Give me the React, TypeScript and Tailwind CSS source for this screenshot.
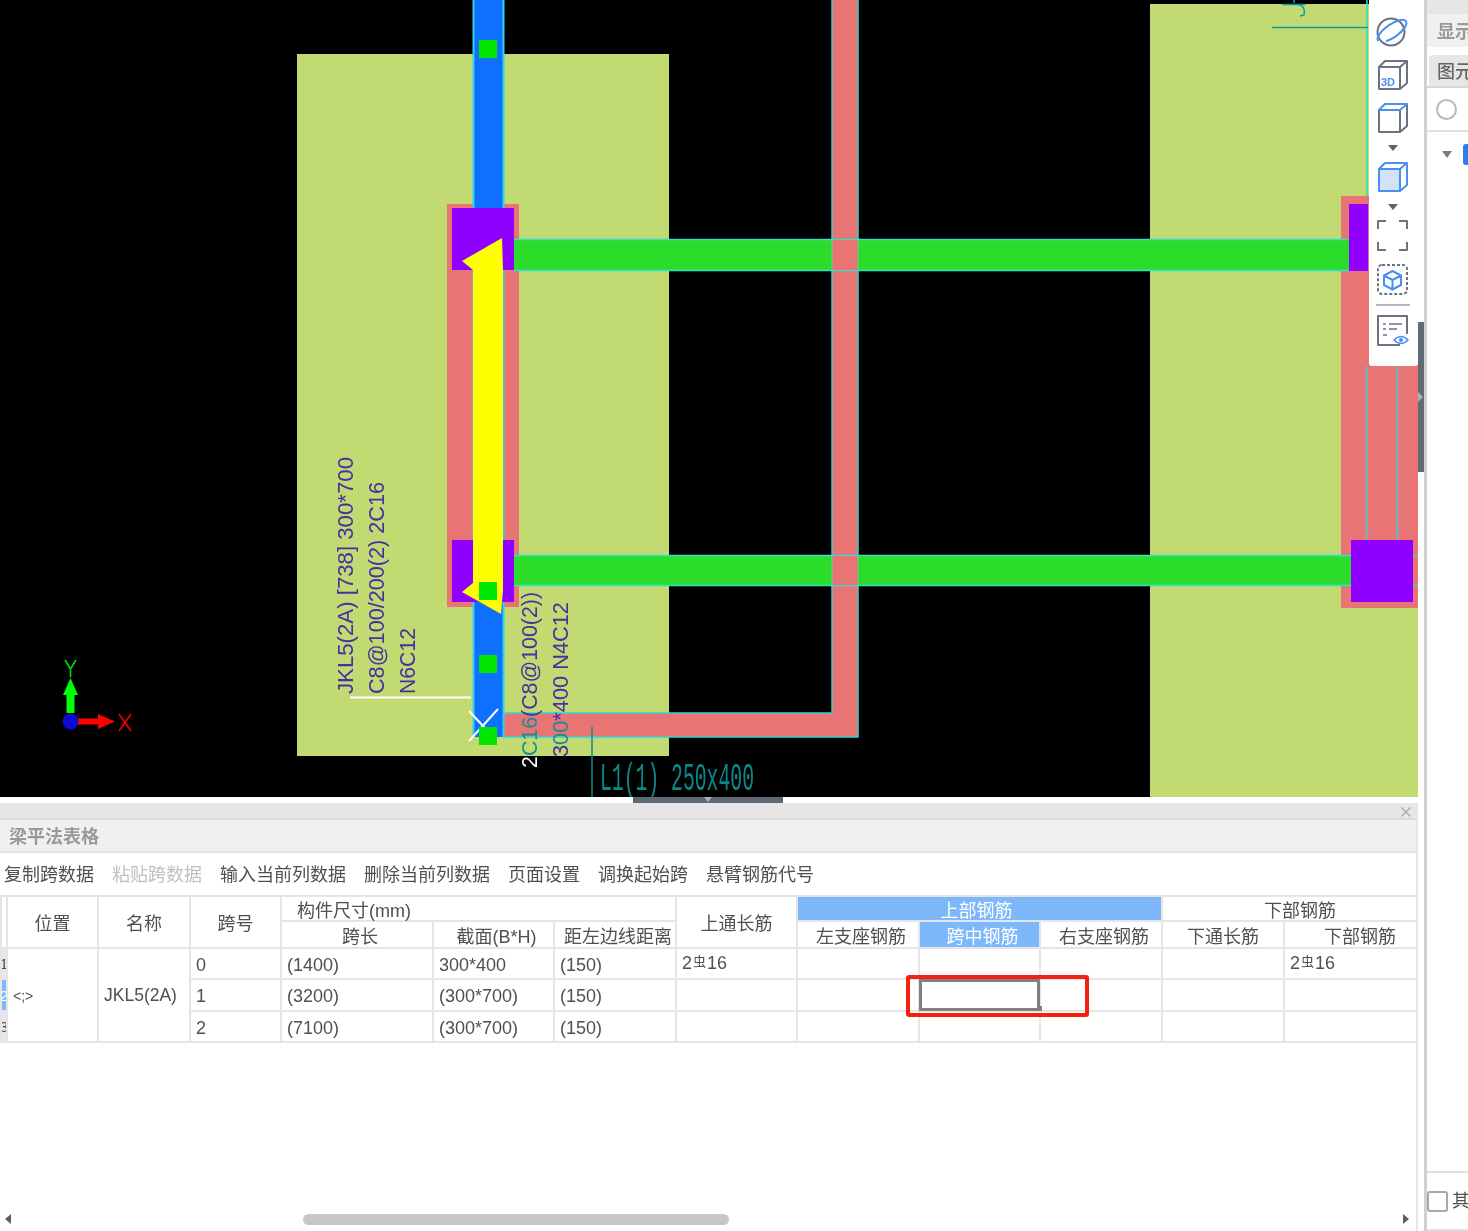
import React from "react";

const cellB = "border-2 border-[#e5e5e5]";
const head = `${cellB} p-0 pt-[4px] text-center font-normal align-middle`;
const data = `${cellB} px-[5px] py-0 pt-[2px] text-left align-middle`;

function Rebar() {
  return (
    <span className="relative top-[-2px]">
      2<span className="relative top-[-3px] mx-[1px] text-[13px]">虫</span>16
    </span>
  );
}

function RowNo({ n, active }: { n: string; active?: boolean }) {
  return (
    <td className={`${cellB} overflow-hidden p-0 text-[15px] ${active ? "bg-[#7cb8fa] text-white" : "bg-[#e8e8e8]"}`}>
      <div className="mr-[-2px] flex justify-end">{n}</div>
    </td>
  );
}

function Canvas() {
  const mono = "fill-[#47309f]";
  return (
    <svg width="1418" height="797" viewBox="0 0 1418 797" className="block bg-black">
      <rect x="297" y="54" width="372" height="702" fill="#c1db72" />
      <rect x="1150" y="4" width="268" height="793" fill="#c1db72" />

      {/* pink beam */}
      <rect x="832" y="0" width="26" height="737" fill="#e97474" />
      <rect x="503" y="713" width="355" height="24" fill="#e97474" />
      <path d="M503 713H832V0M858 0V737H503" fill="none" stroke="#35d4d4" strokeWidth="1.5" />

      {/* left column */}
      <rect x="447" y="204" width="72" height="403" fill="#e97474" />
      <rect x="473" y="0" width="31" height="737" fill="#0f6fff" />
      <path d="M473.5 0V737M503.5 0V737" stroke="#35d0f0" strokeWidth="2" />
      <rect x="452" y="208" width="62" height="62" fill="#8f00ff" />
      <rect x="452" y="540" width="62" height="62" fill="#8f00ff" />

      {/* green beams */}
      <rect x="514" y="239" width="834" height="32" fill="#2bdc2b" />
      <rect x="514" y="555" width="838" height="31" fill="#2bdc2b" />
      <rect x="1413" y="555" width="5" height="31" fill="#2bdc2b" />
      <path d="M514 239.5H1348M514 270.5H1348M514 555.5H1352M514 585.5H1352" stroke="#35e0c8" strokeWidth="1.5" />
      <rect x="832" y="240" width="26" height="30" fill="#e97474" />
      <rect x="832" y="556" width="26" height="29" fill="#e97474" />
      <path d="M832 240V270M858 240V270M832 556V585M858 556V585" stroke="#6fc4b0" strokeWidth="1" />

      {/* right column */}
      <rect x="1341" y="196" width="77" height="412" fill="#e97474" />
      <rect x="1349" y="204" width="19" height="67" fill="#8f00ff" />
      <rect x="1341" y="240" width="8" height="31" fill="#2bdc2b" />
      <rect x="1341" y="555" width="10" height="31" fill="#2bdc2b" />
      <path d="M1341 239.5H1349M1341 270.5H1349M1341 555.5H1351M1341 585.5H1351M1413 555.5H1418M1413 585.5H1418" stroke="#35e0c8" strokeWidth="1.5" />
      <rect x="1351" y="540" width="62" height="62" fill="#8f00ff" />
      <path d="M1366.5 366V540M1397.5 366V540" stroke="#35d4d4" strokeWidth="1.5" />
      <path d="M1367 0V196" stroke="#35d4d4" strokeWidth="1.5" />

      {/* yellow arrow */}
      <polygon points="502,238 462,261 473,270 473,583 462,592 501,614 503,590 503,270" fill="#ffff00" />

      {/* grips */}
      <rect x="479" y="40" width="18" height="18" fill="#00e600" />
      <rect x="479" y="582" width="18" height="18" fill="#00e600" />
      <rect x="479" y="655" width="18" height="18" fill="#00e600" />
      <path d="M469 711L497 741M498 709L469 741" stroke="#ffffff" strokeWidth="2" />
      <rect x="479" y="727" width="18" height="18" fill="#00e600" />

      {/* labels */}
      <path d="M350 697.5H471" stroke="#ffffff" strokeWidth="2" />
      <text transform="translate(353 694) rotate(-90)" textLength="237" lengthAdjust="spacingAndGlyphs" fontSize="22" className={mono}>
        JKL5(2A) [738] 300*700
      </text>
      <text transform="translate(384 694) rotate(-90)" textLength="212" lengthAdjust="spacingAndGlyphs" fontSize="22" className={mono}>
        C8@100/200(2) 2C16
      </text>
      <text transform="translate(415 694) rotate(-90)" textLength="66" lengthAdjust="spacingAndGlyphs" fontSize="22" className={mono}>
        N6C12
      </text>
      <text transform="translate(537 768) rotate(-90)" textLength="176" lengthAdjust="spacingAndGlyphs" fontSize="22" className={mono}>
        <tspan fill="#ffffff">2</tspan>
        <tspan fill="#1b8f96">C16</tspan>
        <tspan>(C8@100(2))</tspan>
      </text>
      <text transform="translate(568 757) rotate(-90)" textLength="155" lengthAdjust="spacingAndGlyphs" fontSize="22" className={mono}>
        3<tspan fill="#1b8f96">00</tspan>*400 N4C12
      </text>
      <path d="M592 727V797" stroke="#0a8a8c" strokeWidth="1.5" />
      <text x="600" y="790" textLength="154" lengthAdjust="spacingAndGlyphs" fontSize="38" fill="#09898c" className="font-['Liberation_Mono',monospace]">
        L1(1) 250x400
      </text>
      <path d="M1272 27.5H1368M1282 4.5H1305M1298 4.5Q1306 6 1304 15L1300 16M1294 0V3" fill="none" stroke="#08a0a0" strokeWidth="1.5" />

      {/* axes */}
      <path d="M70.5 713V690" stroke="#00ff00" strokeWidth="8" />
      <polygon points="70.5,678 63,695 78,695" fill="#00ff00" />
      <path d="M78 721.5H100" stroke="#ff0000" strokeWidth="6" />
      <polygon points="115,721.5 98,714 98,729" fill="#ff0000" />
      <circle cx="70.5" cy="721.5" r="8" fill="#0a0ad0" />
      <path d="M65 660L70.5 669L76 660M70.5 669V677" fill="none" stroke="#00dd00" strokeWidth="1.6" />
      <path d="M119 714L131 731M131 714L119 731" fill="none" stroke="#ee0000" strokeWidth="1.6" />
    </svg>
  );
}

function ToolIcons() {
  const g = "#6b7280";
  const b = "#4a90ee";
  const w = "2";
  return (
    <svg width="49" height="366" viewBox="1369 0 49 366" className="block">
      <circle cx="1391" cy="32" r="13.5" fill="none" stroke={g} strokeWidth={w} />
      <ellipse cx="1392" cy="31" rx="17" ry="6.5" transform="rotate(-35 1392 31)" fill="none" stroke={b} strokeWidth={w} strokeDasharray="30 8 60" />

      <path d="M1379 67H1400V89H1379ZM1379 67L1385 61H1407V83L1400 89M1400 67L1407 61" fill="none" stroke={g} strokeWidth={w} strokeLinejoin="round" />
      <text x="1381" y="86" fontSize="11" fontWeight="700" fill={b}>3D</text>

      <path d="M1379 110H1400V132H1379ZM1400 132L1407 126V104" fill="none" stroke={g} strokeWidth={w} strokeLinejoin="round" />
      <path d="M1379 110L1385 104H1407L1400 110Z" fill="none" stroke={b} strokeWidth={w} strokeLinejoin="round" />
      <polygon points="1388,145 1398,145 1393,151" fill="#5b6270" />

      <path d="M1379 169H1400V191H1379Z" fill="#d2e3f9" stroke={b} strokeWidth={w} strokeLinejoin="round" />
      <path d="M1379 169L1385 163H1407V185L1400 191M1400 169L1407 163" fill="none" stroke={b} strokeWidth={w} strokeLinejoin="round" />
      <polygon points="1388,204 1398,204 1393,210" fill="#5b6270" />

      <path d="M1378 229V221H1386M1399 221H1407V229M1407 242V250H1399M1386 250H1378V242" fill="none" stroke={g} strokeWidth={w} strokeLinejoin="round" />

      <rect x="1378" y="265" width="29" height="29" rx="4" fill="none" stroke={g} strokeWidth={w} strokeDasharray="3 2" />
      <path d="M1392.5 271L1401 275.5V285L1392.5 289.5L1384 285V275.5ZM1384 275.5L1392.5 280L1401 275.5M1392.5 280V289.5" fill="none" stroke={b} strokeWidth={w} strokeLinejoin="round" />

      <path d="M1376 305H1410" stroke="#6b7280" strokeWidth="1.2" />

      <path d="M1400 345H1378V316H1407V334" fill="none" stroke={g} strokeWidth={w} strokeLinejoin="round" />
      <path d="M1383 324H1386M1389 324H1402M1383 329H1386M1389 329H1397M1383 335H1387" stroke={g} strokeWidth="1.5" />
      <path d="M1394 340Q1401 333 1408 340Q1401 347 1394 340Z" fill="#ffffff" stroke={b} strokeWidth="1.4" />
      <circle cx="1401" cy="340" r="2" fill={b} />
    </svg>
  );
}

function BeamTable() {
  return (
    <table className="w-[1417px] table-fixed border-collapse text-[18px] leading-none text-[#505050]">
      <colgroup>
        <col className="w-[6px]" />
        <col className="w-[91px]" />
        <col className="w-[92px]" />
        <col className="w-[91px]" />
        <col className="w-[152px]" />
        <col className="w-[121px]" />
        <col className="w-[122px]" />
        <col className="w-[121px]" />
        <col className="w-[122px]" />
        <col className="w-[121px]" />
        <col className="w-[122px]" />
        <col className="w-[122px]" />
        <col className="w-[134px]" />
      </colgroup>
      <thead>
        <tr className="h-[25px]">
          <th rowSpan={2} className={head} />
          <th rowSpan={2} className={head}>位置</th>
          <th rowSpan={2} className={head}>名称</th>
          <th rowSpan={2} className={head}>跨号</th>
          <th colSpan={3} className={`${cellB} p-0 pl-[15px] pt-[4px] text-left font-normal`}>构件尺寸(mm)</th>
          <th rowSpan={2} className={head}>上通长筋</th>
          <th colSpan={3} className={`${cellB} bg-[#7cb8fa] p-0 pr-[6px] pt-[4px] text-center font-normal text-white`}>上部钢筋</th>
          <th colSpan={2} className={`${cellB} p-0 pl-[20px] pt-[4px] text-center font-normal`}>下部钢筋</th>
        </tr>
        <tr className="h-[27px]">
          <th className={`${head} pl-[6px]`}>跨长</th>
          <th className={`${head} pl-[6px]`}>截面(B*H)</th>
          <th className={`${head} overflow-hidden whitespace-nowrap pl-[6px]`}>距左边线距离</th>
          <th className={`${head} pl-[6px]`}>左支座钢筋</th>
          <th className={`${head} bg-[#7cb8fa] pl-[6px] text-white`}>跨中钢筋</th>
          <th className={`${head} pl-[6px]`}>右支座钢筋</th>
          <th className={head}>下通长筋</th>
          <th className={`${head} pl-[18px]`}>下部钢筋</th>
        </tr>
      </thead>
      <tbody>
        <tr className="h-[31px]">
          <RowNo n="1" />
          <td rowSpan={3} className={`${data} text-[14px]`}>&lt;;&gt;</td>
          <td rowSpan={3} className={`${data} overflow-hidden whitespace-nowrap text-[17.5px]`}>JKL5(2A)</td>
          <td className={data}>0</td>
          <td className={data}>(1400)</td>
          <td className={data}>300*400</td>
          <td className={data}>(150)</td>
          <td className={data}><Rebar /></td>
          <td className={data} />
          <td className={data} />
          <td className={data} />
          <td className={data} />
          <td className={data}><Rebar /></td>
        </tr>
        <tr className="h-[32px]">
          <RowNo n="2" active />
          <td className={data}>1</td>
          <td className={data}>(3200)</td>
          <td className={data}>(300*700)</td>
          <td className={data}>(150)</td>
          <td className={data} />
          <td className={data} />
          <td className={`${data} relative`}>
            <div className="absolute inset-[-1px] border-[3px] border-[#808080]" />
            <div className="absolute bottom-[-1px] right-[-3px] h-[5px] w-[5px] bg-[#808080]" />
            <div className="absolute left-[-14px] right-[-50px] top-[-5px] h-[42px] rounded-[3px] border-[4px] border-[#f5210f]" />
          </td>
          <td className={data} />
          <td className={data} />
          <td className={data} />
        </tr>
        <tr className="h-[31px]">
          <RowNo n="3" />
          <td className={data}>2</td>
          <td className={data}>(7100)</td>
          <td className={data}>(300*700)</td>
          <td className={data}>(150)</td>
          <td className={data} />
          <td className={data} />
          <td className={data} />
          <td className={data} />
          <td className={data} />
          <td className={data} />
        </tr>
      </tbody>
    </table>
  );
}

export default function App() {
  const tools = ["复制跨数据", "粘贴跨数据", "输入当前列数据", "删除当前列数据", "页面设置", "调换起始跨", "悬臂钢筋代号"];
  return (
    <div className="flex h-[1231px] w-[1468px] overflow-hidden bg-white font-['Liberation_Sans','Noto_Sans_CJK_SC',sans-serif] blur-[0.4px]">
      <div className="flex w-[1418px] flex-col">
        <div className="relative h-[797px] w-[1418px]">
          <Canvas />
          <div className="absolute right-0 top-0 h-[366px] w-[49px] rounded-b-[3px] bg-white">
            <ToolIcons />
          </div>
        </div>
        <div className="h-[6px] bg-white">
          <div className="relative ml-[633px] h-[6px] w-[150px] bg-[#5f6a74]">
            <div className="absolute left-[71px] top-0 h-0 w-0 border-x-[4px] border-t-[5px] border-x-transparent border-t-[#aab0b6]" />
          </div>
        </div>
        <div className="flex min-h-0 flex-1 flex-col border-r-2 border-[#e5e5e5]">
          <div className="flex h-[17px] items-center justify-end border-b-2 border-[#dcdcdc] bg-[#e6e6e6] pr-[5px] pt-[2px]">
            <svg width="10" height="10" viewBox="0 0 10 10"><path d="M0.5 0.5L9.5 9.5M9.5 0.5L0.5 9.5" stroke="#a8a8a8" strokeWidth="1.2" /></svg>
          </div>
          <div className="flex h-[33px] items-center border-b-2 border-[#e3e3e3] bg-[#f0f0f0] pl-[9px] pt-[3px] text-[18px] font-bold text-[#999999]">
            梁平法表格
          </div>
          <div className="flex h-[42px] items-center gap-[18px] pl-[4px] pt-[3px] text-[18px] text-[#505050]">
            {tools.map((t, i) => (
              <span key={t} className={i === 1 ? "text-[#c0c0c0]" : ""}>{t}</span>
            ))}
          </div>
          <BeamTable />
          <div className="min-h-0 flex-1" />
          <div className="mb-[2px] flex h-[20px] items-center">
            <svg width="10" height="12" viewBox="0 0 10 12" className="ml-[3px]"><polygon points="8,1 2,6 8,11" fill="#58606c" /></svg>
            <div className="ml-[290px] h-[11px] w-[426px] rounded-full bg-[#c6c6c6]" />
            <svg width="10" height="12" viewBox="0 0 10 12" className="ml-[672px]"><polygon points="2,1 8,6 2,11" fill="#58606c" /></svg>
          </div>
        </div>
      </div>

      <div className="relative w-[6px] bg-white">
        <div className="absolute left-0 top-[322px] h-[150px] w-[6px] bg-[#5f6a74]" />
        <div className="absolute left-0 top-[392px] h-0 w-0 border-y-[5px] border-l-[5px] border-y-transparent border-l-[#aab0b6]" />
      </div>

      <div className="flex flex-1 flex-col overflow-hidden whitespace-nowrap border-l-[3px] border-[#cdd1d5] text-[18px]">
        <div className="h-[14px] bg-[#e6e6e6]" />
        <div className="flex h-[33px] items-center bg-[#f0f0f0] pl-[10px] pt-[3px] font-bold text-[#999999]">显示</div>
        <div className="h-[8px] bg-white" />
        <div className="flex h-[33px] items-center border-b-2 border-[#d8d8d8] pl-[2px]">
          <div className="flex h-full flex-1 items-center rounded-tl-[4px] bg-[#e6e6e6] pl-[8px] pt-[3px] font-medium text-[#666666]">图元</div>
        </div>
        <div className="flex h-[44px] items-center border-b-2 border-[#e0e0e0] pl-[9px]">
          <div className="h-[21px] w-[21px] rounded-full border-2 border-[#b8b8b8]" />
        </div>
        <div className="flex h-[44px] items-center pl-[15px]">
          <div className="h-0 w-0 border-x-[5px] border-t-[7px] border-x-transparent border-t-[#777c84]" />
          <div className="ml-[11px] flex h-[21px] w-[10px] shrink-0 items-center justify-end rounded-[3px] bg-[#2a80e8]">
            <div className="h-[2px] w-[5px] bg-white" />
          </div>
        </div>
        <div className="min-h-0 flex-1" />
        <div className="flex h-[58px] items-center border-t-2 border-[#e0e0e0]">
          <div className="h-[21px] w-[21px] shrink-0 rounded-[3px] border-2 border-[#a8a8a8]" />
          <span className="ml-[4px] text-[#505050]">其</span>
        </div>
        <div className="h-[2px] bg-[#e0e0e0]" />
      </div>
    </div>
  );
}
